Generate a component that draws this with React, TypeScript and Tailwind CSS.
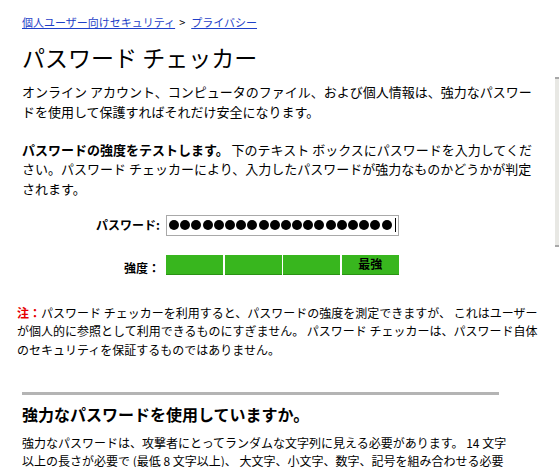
import React from "react";

const FONT = '"Noto Sans CJK JP", "Noto Sans", sans-serif';

function PasswordDots({ count }: { count: number }) {
  return (
    <div className="flex h-full items-center gap-[1.2px] pl-[2px]">
      {Array.from({ length: count }).map((_, i) => (
        <span key={i} className="block h-[10px] w-[10px] rounded-full bg-black" />
      ))}
      <span className="ml-[2px] block h-[14px] w-px bg-black" />
    </div>
  );
}

function StrengthBar() {
  const segments = ["", "", "", "最強"];
  return (
    <div className="flex h-[20px] w-[233px] gap-[1.3px]">
      {segments.map((label, i) => (
        <div
          key={i}
          className="flex flex-1 items-center justify-center border-b border-[#2a9214] bg-[#38b61e] text-[12px] font-bold leading-none text-black"
        >
          {label}
        </div>
      ))}
    </div>
  );
}

export default function App() {
  return (
    <div className="relative min-h-[467px] bg-white text-black" style={{ fontFamily: FONT }}>
      <div className="w-[541px] pl-[22px] pt-[14px]">
        <nav className="text-[11px] leading-[16px]">
          <a href="#" className="text-[#1f3fc8] underline">
            個人ユーザー向けセキュリティ
          </a>
          <span className="ml-[4px] mr-[6px]">&gt;</span>
          <a href="#" className="text-[#1f3fc8] underline">
            プライバシー
          </a>
        </nav>

        <h1 className="mt-[12px] text-[23px] font-normal leading-[30px]">パスワード チェッカー</h1>

        <p className="mt-[10px] text-[13px] leading-[19.5px]">
          オンライン アカウント、コンピュータのファイル、および個人情報は、強力なパスワードを使用して保護すればそれだけ安全になります。
        </p>

        <p className="mt-[18.5px] text-[13px] leading-[19.5px]">
          <b>パスワードの強度をテストします。</b> 下のテキスト ボックスにパスワードを入力してください。パスワード チェッカーにより、入力したパスワードが強力なものかどうかが判定されます。
        </p>

        <div className="mt-[16.5px] grid grid-cols-[138px_233px] items-center gap-x-[6px] gap-y-[17px]">
          <div className="text-right text-[12px] font-bold">パスワード:</div>
          <div className="h-[21px] border border-[#a9a9a9] bg-white">
            <PasswordDots count={20} />
          </div>
          <div className="pt-[6px] text-right text-[12px] font-bold">強度：</div>
          <StrengthBar />
        </div>

        <p className="-ml-[5px] mt-[27px] text-[12px] leading-[18.5px]">
          <b className="text-[#e60000]">注：</b>パスワード チェッカーを利用すると、パスワードの強度を測定できますが、 これはユーザーが個人的に参照として利用できるものにすぎません。 パスワード チェッカーは、パスワード自体のセキュリティを保証するものではありません。
        </p>

        <div className="mt-[33px] w-[490px]">
          <div className="h-[3px] w-[477px] bg-[#b4b4b4]" />
          <h2 className="mt-[8px] text-[16px] font-bold leading-[22px]">強力なパスワードを使用していますか。</h2>
          <p className="mt-[8.75px] text-[12px] leading-[18.5px]">
            強力なパスワードは、攻撃者にとってランダムな文字列に見える必要があります。 14 文字以上の長さが必要で (最低 8 文字以上)、 大文字、小文字、数字、記号を組み合わせる必要があります。
          </p>
        </div>
      </div>

      <div className="absolute left-[555px] top-[77px] h-[170px] w-[4px] border-y-2 border-[#a8a8a8] bg-[#e8e8e4]" />
    </div>
  );
}
